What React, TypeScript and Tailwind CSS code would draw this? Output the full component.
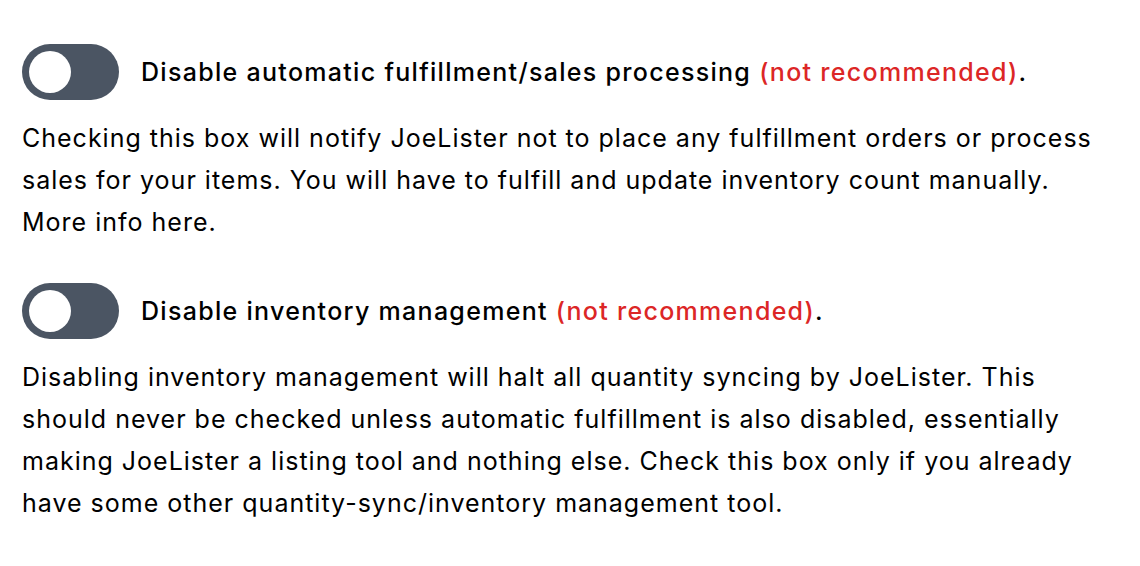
import { useState } from "react";

function Toggle({ on, onChange }: { on: boolean; onChange: (v: boolean) => void }) {
    return (
        <button
            type="button"
            onClick={() => onChange(!on)}
            className={`relative shrink-0 w-[97px] h-[56px] rounded-full transition-colors ${
                on ? "bg-[#2563eb]" : "bg-[#4b5563]"
            }`}
        >
            <span
                className={`absolute top-[7px] left-[7px] w-[42px] h-[42px] rounded-full bg-white transition-transform ${
                    on ? "translate-x-[41px]" : "translate-x-0"
                }`}
            />
        </button>
    );
}

function Setting({
    title,
    children,
}: {
    title: string;
    children: React.ReactNode;
}) {
    const [on, setOn] = useState(false);
    return (
        <div className="flex flex-col gap-[17px]">
            <div className="flex items-center gap-[22px]">
                <Toggle on={on} onChange={setOn} />
                <span className="text-[25px] font-medium tracking-[1.3px] text-black leading-[32px]">
                    {title} <span className="text-[#dc2626]">(not recommended)</span>.
                </span>
            </div>
            <p className="text-[25px] tracking-[1px] leading-[42px] text-black">{children}</p>
        </div>
    );
}

export default function App() {
    return (
        <div
            className="pt-[44px] pl-[22px] pr-[30px] flex flex-col gap-[40px] bg-white min-h-screen"
            style={{ fontFamily: "Inter, 'Noto Sans', sans-serif" }}
        >
            <Setting title="Disable automatic fulfillment/sales processing">
                Checking this box will notify JoeLister not to place any fulfillment orders or process sales for
                your items. You will have to fulfill and update inventory count manually. More info here.
            </Setting>
            <Setting title="Disable inventory management">
                Disabling inventory management will halt all quantity syncing by JoeLister. This should never be
                checked unless automatic fulfillment is also disabled, essentially making JoeLister a listing tool
                and nothing else. Check this box only if you already have some other quantity-sync/inventory
                management tool.
            </Setting>
        </div>
    );
}
